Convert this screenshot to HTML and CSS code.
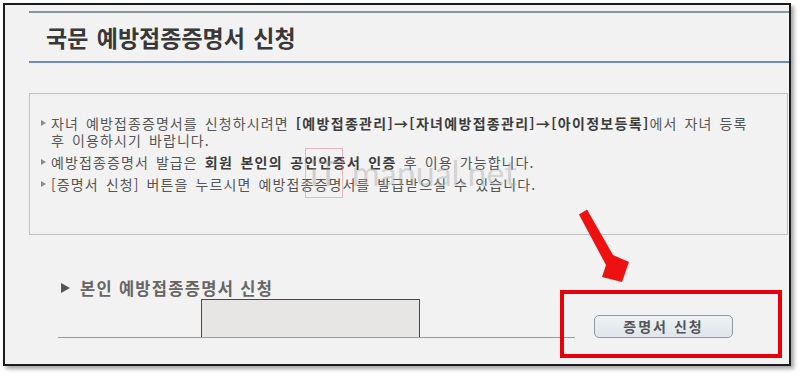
FILE: index.html
```html
<!DOCTYPE html>
<html lang="ko">
<head>
<meta charset="utf-8">
<link rel="stylesheet" href="styles.css">
</head>
<body>
<div class="frame">
  <div class="topline"></div>
  <h1 class="title">국문 예방접종증명서 신청</h1>
  <div class="blueline"></div>
  <div class="info">
    <ul class="notes">
      <li>자녀 예방접종증명서를 신청하시려면 <b>[예방접종관리]→[자녀예방접종관리]→[아이정보등록]</b>에서 자녀 등록<br>후 이용하시기 바랍니다.</li>
      <li>예방접종증명서 발급은 <b>회원 본인의 공인인증서 인증</b> 후 이용 가능합니다.</li>
      <li>[증명서 신청] 버튼을 누르시면 예방접종증명서를 발급받으실 수 있습니다.</li>
    </ul>
  </div>
  <div class="apply">
    <div class="apply-left">
      <h2 class="apply-title">본인 예방접종증명서 신청</h2>
      <div class="masked"></div>
    </div>
    <button class="btn" type="button">증명서 신청</button>
  </div>
  <div class="watermark"><span class="wm-it">iT</span> manual.net</div>
  <svg class="annot" width="800" height="377" viewBox="0 0 800 377">
    <polygon fill="#ee1111" points="587,209.5 613,255 629,262 622,282 602,277 606,265 579,214.5"/>
    <rect x="562" y="292" width="218" height="64" fill="none" stroke="#e8000c" stroke-width="4"/>
  </svg>
</div>
</body>
</html>
```

FILE: styles.css
```css
* { box-sizing: border-box; }
html, body { margin: 0; padding: 0; }
body {
  background: #ffffff;
  font-family: "Noto Sans CJK KR", "Noto Sans", sans-serif;
  width: 800px;
  height: 377px;
  overflow: hidden;
}
.frame {
  position: relative;
  margin: 3px 0 0 3px;
  width: 788px;
  height: 363px;
  border: 2px solid #1c1c1c;
  background: #f2f2f2;
  box-shadow: 3px 3px 4px rgba(0,0,0,0.35);
  padding-left: 24px;
}
.topline {
  margin-top: 6px;
  height: 2px;
  background: #8797a0;
}
.title {
  margin: 0;
  height: 48px;
  line-height: 48px;
  padding-left: 17px;
  font-size: 23px;
  font-weight: 700;
  letter-spacing: 0;
  word-spacing: 2px;
  color: #383838;
}
.blueline {
  height: 2px;
  background: #6e8bbf;
}
.info {
  margin-top: 30px;
  margin-right: 1px;
  height: 142px;
  border: 1px solid #c2c2c2;
  padding-top: 21px;
}
.notes {
  list-style: none;
  margin: 0;
  padding: 0 0 0 21px;
  font-size: 14px;
  line-height: 17px;
  color: #555;
  letter-spacing: 1.1px;
  word-spacing: 2px;
  white-space: nowrap;
}
.notes li {
  position: relative;
  margin-bottom: 5px;
}
.notes li::before {
  content: "";
  position: absolute;
  left: -10px;
  top: 5px;
  border-left: 5px solid #8a8a8a;
  border-top: 3.5px solid transparent;
  border-bottom: 3.5px solid transparent;
}
.notes b {
  color: #3c3c3c;
  font-weight: 700;
  letter-spacing: 1.3px;
}
.apply {
  display: flex;
  align-items: flex-end;
  margin-top: 43px;
  margin-left: 29px;
}
.apply-left {
  width: 517px;
  border-bottom: 1px solid #9a9a9a;
}
.apply-title {
  margin: 0;
  height: 20px;
  line-height: 20px;
  font-size: 16.5px;
  font-weight: 700;
  letter-spacing: 1.3px;
  color: #666;
  padding-left: 22px;
  position: relative;
}
.apply-title::before {
  content: "";
  position: absolute;
  left: 3px;
  top: 5px;
  border-left: 9px solid #555;
  border-top: 5px solid transparent;
  border-bottom: 5px solid transparent;
}
.masked {
  margin: 1px 0 0 143px;
  width: 219px;
  height: 38px;
  border: 1px solid #4a4a4a;
  border-bottom: 0;
  background: #e8e5e5;
}
.btn {
  margin-left: 19px;
  width: 139px;
  height: 23px;
  border: 1px solid #8c9aa6;
  border-radius: 5px;
  background: linear-gradient(#eef2f5, #dfe5ea);
  font-family: "Noto Sans CJK KR", sans-serif;
  font-size: 14px;
  font-weight: 700;
  letter-spacing: 2px;
  color: #555;
  padding: 0;
  line-height: 21px;
}
.watermark {
  position: absolute;
  left: 300px;
  top: 143px;
  font-family: "Lato", sans-serif;
  font-size: 34px;
  line-height: 48px;
  color: rgba(160,160,160,0.38);
  white-space: nowrap;
}
.wm-it {
  display: inline-block;
  border: 1px solid rgba(230,120,140,0.5);
  padding: 0 4px;
  color: rgba(140,140,140,0.35);
}
.annot {
  position: absolute;
  left: -5px;
  top: -5px;
  pointer-events: none;
}
```
